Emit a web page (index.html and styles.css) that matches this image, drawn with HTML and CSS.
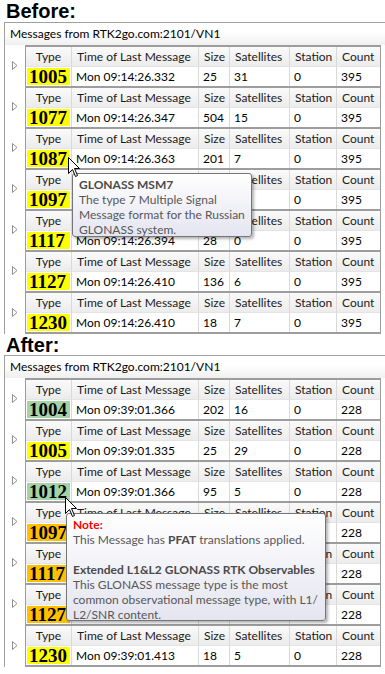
FILE: index.html
```html
<!DOCTYPE html>
<html lang="en">
<head>
    <meta charset="UTF-8">
    <meta name="viewport" content="width=device-width, initial-scale=1.0">
    <title>Messages</title>
    <link rel="stylesheet" href="styles.css">
</head>
<body>
    <h1 class="caption">Before:</h1>
    <section class="panel">
        <div class="panel-title">Messages from RTK2go.com:2101/VN1</div>
        <div class="msg">
            <div class="expander"><svg width="6" height="9" viewBox="0 0 6 9"><path d="M0.5 0.5 L5 4.5 L0.5 8.5 Z" fill="none" stroke="#8e8e8e"/></svg></div>
            <div class="grid">
                <div class="th type-h">Type</div><div class="th">Time of Last Message</div><div class="th">Size</div><div class="th">Satellites</div><div class="th">Station</div><div class="th last">Count</div>
                <div class="td type"><span class="num yellow">1005</span></div><div class="td">Mon 09:14:26.332</div><div class="td">25</div><div class="td">31</div><div class="td">0</div><div class="td last">395</div>
            </div>
        </div>
        <div class="msg">
            <div class="expander"><svg width="6" height="9" viewBox="0 0 6 9"><path d="M0.5 0.5 L5 4.5 L0.5 8.5 Z" fill="none" stroke="#8e8e8e"/></svg></div>
            <div class="grid">
                <div class="th type-h">Type</div><div class="th">Time of Last Message</div><div class="th">Size</div><div class="th">Satellites</div><div class="th">Station</div><div class="th last">Count</div>
                <div class="td type"><span class="num yellow">1077</span></div><div class="td">Mon 09:14:26.347</div><div class="td">504</div><div class="td">15</div><div class="td">0</div><div class="td last">395</div>
            </div>
        </div>
        <div class="msg">
            <div class="expander"><svg width="6" height="9" viewBox="0 0 6 9"><path d="M0.5 0.5 L5 4.5 L0.5 8.5 Z" fill="none" stroke="#8e8e8e"/></svg></div>
            <div class="grid">
                <div class="th type-h">Type</div><div class="th">Time of Last Message</div><div class="th">Size</div><div class="th">Satellites</div><div class="th">Station</div><div class="th last">Count</div>
                <div class="td type"><span class="num yellow">1087</span></div><div class="td">Mon 09:14:26.363</div><div class="td">201</div><div class="td">7</div><div class="td">0</div><div class="td last">395</div>
            </div>
        </div>
        <div class="msg">
            <div class="expander"><svg width="6" height="9" viewBox="0 0 6 9"><path d="M0.5 0.5 L5 4.5 L0.5 8.5 Z" fill="none" stroke="#8e8e8e"/></svg></div>
            <div class="grid">
                <div class="th type-h">Type</div><div class="th">Time of Last Message</div><div class="th">Size</div><div class="th">Satellites</div><div class="th">Station</div><div class="th last">Count</div>
                <div class="td type"><span class="num yellow">1097</span></div><div class="td">Mon 09:14:26.378</div><div class="td">160</div><div class="td">9</div><div class="td">0</div><div class="td last">395</div>
            </div>
        </div>
        <div class="msg">
            <div class="expander"><svg width="6" height="9" viewBox="0 0 6 9"><path d="M0.5 0.5 L5 4.5 L0.5 8.5 Z" fill="none" stroke="#8e8e8e"/></svg></div>
            <div class="grid">
                <div class="th type-h">Type</div><div class="th">Time of Last Message</div><div class="th">Size</div><div class="th">Satellites</div><div class="th">Station</div><div class="th last">Count</div>
                <div class="td type"><span class="num yellow">1117</span></div><div class="td">Mon 09:14:26.394</div><div class="td">28</div><div class="td">0</div><div class="td">0</div><div class="td last">395</div>
            </div>
        </div>
        <div class="msg">
            <div class="expander"><svg width="6" height="9" viewBox="0 0 6 9"><path d="M0.5 0.5 L5 4.5 L0.5 8.5 Z" fill="none" stroke="#8e8e8e"/></svg></div>
            <div class="grid">
                <div class="th type-h">Type</div><div class="th">Time of Last Message</div><div class="th">Size</div><div class="th">Satellites</div><div class="th">Station</div><div class="th last">Count</div>
                <div class="td type"><span class="num yellow">1127</span></div><div class="td">Mon 09:14:26.410</div><div class="td">136</div><div class="td">6</div><div class="td">0</div><div class="td last">395</div>
            </div>
        </div>
        <div class="msg end">
            <div class="expander"><svg width="6" height="9" viewBox="0 0 6 9"><path d="M0.5 0.5 L5 4.5 L0.5 8.5 Z" fill="none" stroke="#8e8e8e"/></svg></div>
            <div class="grid">
                <div class="th type-h">Type</div><div class="th">Time of Last Message</div><div class="th">Size</div><div class="th">Satellites</div><div class="th">Station</div><div class="th last">Count</div>
                <div class="td type"><span class="num yellow">1230</span></div><div class="td">Mon 09:14:26.410</div><div class="td">18</div><div class="td">7</div><div class="td">0</div><div class="td last">395</div>
            </div>
        </div>
    </section>

    <h1 class="caption after">After:</h1>
    <section class="panel">
        <div class="panel-title">Messages from RTK2go.com:2101/VN1</div>
        <div class="msg">
            <div class="expander"><svg width="6" height="9" viewBox="0 0 6 9"><path d="M0.5 0.5 L5 4.5 L0.5 8.5 Z" fill="none" stroke="#8e8e8e"/></svg></div>
            <div class="grid">
                <div class="th type-h">Type</div><div class="th">Time of Last Message</div><div class="th">Size</div><div class="th">Satellites</div><div class="th">Station</div><div class="th last">Count</div>
                <div class="td type"><span class="num green">1004</span></div><div class="td">Mon 09:39:01.366</div><div class="td">202</div><div class="td">16</div><div class="td">0</div><div class="td last">228</div>
            </div>
        </div>
        <div class="msg">
            <div class="expander"><svg width="6" height="9" viewBox="0 0 6 9"><path d="M0.5 0.5 L5 4.5 L0.5 8.5 Z" fill="none" stroke="#8e8e8e"/></svg></div>
            <div class="grid">
                <div class="th type-h">Type</div><div class="th">Time of Last Message</div><div class="th">Size</div><div class="th">Satellites</div><div class="th">Station</div><div class="th last">Count</div>
                <div class="td type"><span class="num yellow">1005</span></div><div class="td">Mon 09:39:01.335</div><div class="td">25</div><div class="td">29</div><div class="td">0</div><div class="td last">228</div>
            </div>
        </div>
        <div class="msg">
            <div class="expander"><svg width="6" height="9" viewBox="0 0 6 9"><path d="M0.5 0.5 L5 4.5 L0.5 8.5 Z" fill="none" stroke="#8e8e8e"/></svg></div>
            <div class="grid">
                <div class="th type-h">Type</div><div class="th">Time of Last Message</div><div class="th">Size</div><div class="th">Satellites</div><div class="th">Station</div><div class="th last">Count</div>
                <div class="td type"><span class="num green">1012</span></div><div class="td">Mon 09:39:01.366</div><div class="td">95</div><div class="td">5</div><div class="td">0</div><div class="td last">228</div>
            </div>
        </div>
        <div class="msg">
            <div class="expander"><svg width="6" height="9" viewBox="0 0 6 9"><path d="M0.5 0.5 L5 4.5 L0.5 8.5 Z" fill="none" stroke="#8e8e8e"/></svg></div>
            <div class="grid">
                <div class="th type-h">Type</div><div class="th">Time of Last Message</div><div class="th">Size</div><div class="th">Satellites</div><div class="th">Station</div><div class="th last">Count</div>
                <div class="td type"><span class="num orange">1097</span></div><div class="td">Mon 09:39:01.382</div><div class="td">160</div><div class="td">9</div><div class="td">0</div><div class="td last">228</div>
            </div>
        </div>
        <div class="msg">
            <div class="expander"><svg width="6" height="9" viewBox="0 0 6 9"><path d="M0.5 0.5 L5 4.5 L0.5 8.5 Z" fill="none" stroke="#8e8e8e"/></svg></div>
            <div class="grid">
                <div class="th type-h">Type</div><div class="th">Time of Last Message</div><div class="th">Size</div><div class="th">Satellites</div><div class="th">Station</div><div class="th last">Count</div>
                <div class="td type"><span class="num orange">1117</span></div><div class="td">Mon 09:39:01.397</div><div class="td">28</div><div class="td">0</div><div class="td">0</div><div class="td last">228</div>
            </div>
        </div>
        <div class="msg">
            <div class="expander"><svg width="6" height="9" viewBox="0 0 6 9"><path d="M0.5 0.5 L5 4.5 L0.5 8.5 Z" fill="none" stroke="#8e8e8e"/></svg></div>
            <div class="grid">
                <div class="th type-h">Type</div><div class="th">Time of Last Message</div><div class="th">Size</div><div class="th">Satellites</div><div class="th">Station</div><div class="th last">Count</div>
                <div class="td type"><span class="num orange">1127</span></div><div class="td">Mon 09:39:01.413</div><div class="td">136</div><div class="td">6</div><div class="td">0</div><div class="td last">228</div>
            </div>
        </div>
        <div class="msg end">
            <div class="expander"><svg width="6" height="9" viewBox="0 0 6 9"><path d="M0.5 0.5 L5 4.5 L0.5 8.5 Z" fill="none" stroke="#8e8e8e"/></svg></div>
            <div class="grid">
                <div class="th type-h">Type</div><div class="th">Time of Last Message</div><div class="th">Size</div><div class="th">Satellites</div><div class="th">Station</div><div class="th last">Count</div>
                <div class="td type"><span class="num yellow">1230</span></div><div class="td">Mon 09:39:01.413</div><div class="td">18</div><div class="td">5</div><div class="td">0</div><div class="td last">228</div>
            </div>
        </div>
    </section>

    <!-- tooltips over the grids -->
    <div class="tip tip-before">
        <b>GLONASS MSM7</b><br>
        The type 7 Multiple Signal<br>
        Message format for the Russian<br>
        GLONASS system.
    </div>
    <div class="tip tip-after">
        <b class="note">Note:</b><br>
        This Message has <b>PFAT</b> translations applied.<br>
        <br>
        <b>Extended L1&amp;L2 GLONASS RTK Observables</b><br>
        This GLONASS message type is the most<br>
        common observational message type, with L1/<br>
        L2/SNR content.
    </div>

    <svg class="cursor cursor-before" width="13" height="21" viewBox="0 0 13 21"><path d="M0.5 0.5 V16.5 L4.5 12.5 L7.5 19.5 L9.5 18.5 L6.5 11.5 H11.5 Z" fill="#fff" stroke="#000" stroke-linejoin="round"/></svg>
    <svg class="cursor cursor-after" width="13" height="21" viewBox="0 0 13 21"><path d="M0.5 0.5 V16.5 L4.5 12.5 L7.5 19.5 L9.5 18.5 L6.5 11.5 H11.5 Z" fill="#fff" stroke="#000" stroke-linejoin="round"/></svg>
</body>
</html>
```

FILE: styles.css
```css
body {
    margin: 0;
    width: 385px;
    height: 674px;
    overflow: hidden;
    position: relative;
    background: #fff;
    font-family: Lato, "Open Sans", sans-serif;
    font-size: 12px;
    color: #000;
}

.caption {
    margin: 0;
    height: 22px;
    padding-left: 6px;
    font: bold 20px/22px "Liberation Sans", Arial, sans-serif;
}
.caption.after {height: 21px;}

.panel {
    margin-left: 4px;
    border-left: 1px solid #a0a0a0;
    border-top: 1px solid #a0a0a0;
}
.panel-title {
    height: 22px;
    line-height: 22px;
    padding-left: 5px;
    background: linear-gradient(#fff 40%, #f0f0f0);
}

.msg {
    display: flex;
    height: 41px;
}
.msg.end {height: 43px;}
.expander {
    width: 20px;
    display: flex;
    align-items: center;
    justify-content: center;
}
.grid {
    display: grid;
    grid-template-columns: 46px 127px 31px 60px 47px 43px;
    grid-template-rows: 19px 20px;
    border: 1px solid #9d9d9d;
    border-top-width: 2px;
    border-bottom: none;
    align-self: flex-start;
}
.msg.end .grid {border-bottom: 2px solid #9d9d9d;}

.th, .td {
    border-right: 1px solid #d9d9d9;
    white-space: nowrap;
    overflow: hidden;
}
.th.last, .td.last {border-right: none;}
.th {
    background: linear-gradient(#fafafa, #ececec);
    line-height: 19px;
    padding-left: 5px;
    color: #1b1b1b;
}
.th.type-h {text-align: center; padding-left: 0;}
.td {
    padding-left: 4px;
    border-top: 1px solid #e4e4e4;
    line-height: 19px;
}
.td.type {padding: 1px;}
.num {
    display: block;
    height: 17px;
    font: bold 19px/17px "Liberation Serif", "Times New Roman", serif;
    padding-left: 2px;
}
.yellow {background: #ffff00;}
.green {background: #a4d3a8;}
.orange {background: #ffc000;}

.tip {
    position: absolute;
    box-sizing: border-box;
    padding: 3px 6px;
    border: 1px solid #767676;
    border-radius: 3px;
    background: linear-gradient(#ffffff, #e4e5f0);
    box-shadow: 2px 2px 3px rgba(0, 0, 0, 0.3);
    color: #575757;
    font-size: 12px;
    line-height: 15px;
    white-space: nowrap;
}
.tip b {color: #4a4a4a;}
.tip b.note {color: #ff0000;}
.tip-before {left: 72px; top: 173px; width: 180px; height: 64px;}
.tip-after {left: 66px; top: 513px; width: 260px; height: 108px;}

.cursor {position: absolute;}
.cursor-before {left: 68px; top: 157px;}
.cursor-after {left: 65px; top: 497px;}
```
